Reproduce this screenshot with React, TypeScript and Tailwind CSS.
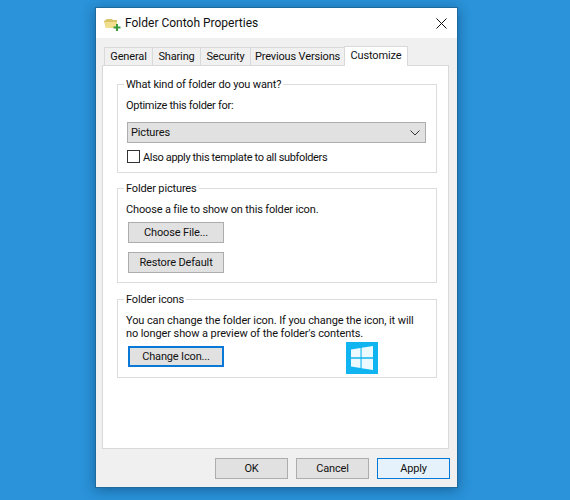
import React from "react";

const FONT = "font-['Roboto','Liberation_Sans',sans-serif]";

function Btn({ label, className = "" }: { label: string; className?: string }) {
  return (
    <div className={`flex items-center justify-center bg-[#e1e1e1] border border-[#adadad] h-[21px] text-[#111] ${className}`}>
      {label}
    </div>
  );
}

function Tab({ label, w }: { label: string; w: string }) {
  return (
    <div className={`${w} h-[19px] flex items-center justify-center pt-px bg-[#f0f0f0] border border-[#d9d9d9] -mr-px text-[#111] mt-[2px] whitespace-nowrap`}>
      {label}
    </div>
  );
}

function Group({ title, h, mt, children }: { title: string; h: string; mt: string; children: React.ReactNode }) {
  return (
    <fieldset className={`${h} ${mt} border border-[#dcdcdc] pl-2 pr-[10px] min-w-0`}>
      <legend className="-ml-[2px] px-[2px] pt-[2px] leading-[16px] text-[#111]">{title}</legend>
      {children}
    </fieldset>
  );
}

export default function App() {
  return (
    <div className={`${FONT} w-[570px] h-[500px] overflow-hidden bg-[#2a93d9] pt-[7px] pl-[95px] text-[11px] leading-[14px] tracking-[-0.15px]`}>
      <div className="w-[363px] h-[481px] bg-[#f0f0f0] border border-[#1d6a9e] shadow-[0_2px_12px_rgba(0,40,80,0.45)] flex flex-col">
        <div className="h-[30px] shrink-0 bg-white flex items-center pl-[8px] pr-[10px]">
          <svg width="17" height="14" viewBox="0 0 17 14" className="mr-[4px] mt-[1px]">
            <path d="M0 4 L3 2 H8 L9 3 H13 V11 H2 Z" fill="#d9c46a" />
            <path d="M1 5 H13 V11 H2 Z" fill="#f1df8e" />
            <path d="M12 7 h2 v2.5 h2.5 v2 H14 V14 h-2 v-2.5 H9.5 v-2 H12 Z" fill="#3c9a3c" />
          </svg>
          <span className="text-[12px] tracking-normal text-[#111] flex-1">Folder Contoh Properties</span>
          <svg width="11" height="11" viewBox="0 0 11 11">
            <path d="M0.5 0.5 L10.5 10.5 M10.5 0.5 L0.5 10.5" stroke="#111" strokeWidth="1" fill="none" />
          </svg>
        </div>

        <div className="flex-1 flex flex-col pl-[6px] pr-[8px] pt-[8px]">
          <div className="flex items-end h-[20px] pl-[2px] relative z-10 -mb-px">
            <Tab label="General" w="w-[49px]" />
            <Tab label="Sharing" w="w-[49px]" />
            <Tab label="Security" w="w-[51px]" />
            <Tab label="Previous Versions" w="w-[95px]" />
            <div className="w-[64px] h-[20px] flex items-start justify-center pt-[2px] bg-white border border-b-0 border-[#d9d9d9] text-[#111]">
              Customize
            </div>
          </div>

          <div className="h-[384px] bg-white border border-[#d9d9d9] pl-[14px] pr-[11px] pt-[9px]">
            <Group title="What kind of folder do you want?" h="h-[98px]" mt="mt-0">
              <div className="text-[#111] mt-[6px] tracking-[-0.3px]">Optimize this folder for:</div>
              <div className="mt-[9px] h-[21px] w-[299px] ml-px bg-[#e1e1e1] border border-[#adadad] flex items-center justify-between pl-[3px] pr-[5px] text-[#111]">
                <span>Pictures</span>
                <svg width="10" height="6" viewBox="0 0 10 6"><path d="M0.5 0.5 L5 5 L9.5 0.5" stroke="#333" fill="none" /></svg>
              </div>
              <div className="mt-[7px] flex items-center h-[16px] ml-px text-[#111] tracking-[-0.35px]">
                <div className="w-[13px] h-[13px] mb-[3px] bg-white border border-[#333] mr-[3px]" />
                Also apply this template to all subfolders
              </div>
            </Group>

            <Group title="Folder pictures" h="h-[104px]" mt="mt-[6px]">
              <div className="text-[#111] mt-[6px]">Choose a file to show on this folder icon.</div>
              <Btn label="Choose File..." className="w-[96px] ml-[2px] mt-[5px]" />
              <Btn label="Restore Default" className="w-[96px] ml-[2px] mt-[9px]" />
            </Group>

            <Group title="Folder icons" h="h-[88px]" mt="mt-[7px]">
              <div className="text-[#111] leading-[13px] mt-[6px] w-[305px] whitespace-nowrap tracking-[-0.1px]">
                You can change the folder icon. If you change the icon, it will<br />
                no longer show a preview of the folder's contents.
              </div>
              <div className="relative">
                <div className="flex items-center justify-center bg-[#e1e1e1] border-2 border-[#0a78d7] h-[21px] w-[96px] ml-[2px] mt-[6px] text-[#111]">
                  Change Icon...
                </div>
                <div className="absolute left-[220px] -top-[4px] w-[32px] h-[32px] bg-[#0fb4f0] flex items-center justify-center">
                  <svg width="22" height="24" viewBox="0 0 22 24">
                    <path d="M0 3.4 L9.5 2 V11.3 H0 Z M10.6 1.8 L22 0 V11.3 H10.6 Z M0 12.7 H9.5 V22 L0 20.6 Z M10.6 12.7 H22 V24 L10.6 22.2 Z" fill="#fff" fillOpacity="0.92" />
                  </svg>
                </div>
              </div>
            </Group>
          </div>

          <div className="flex justify-end gap-[8px] mt-[9px] mr-[-1px] text-[#111]">
            <Btn label="OK" className="w-[73px]" />
            <Btn label="Cancel" className="w-[73px]" />
            <div className="w-[73px] h-[21px] flex items-center justify-center bg-[#e5f1fb] border border-[#0078d7]">Apply</div>
          </div>
        </div>
      </div>
    </div>
  );
}
